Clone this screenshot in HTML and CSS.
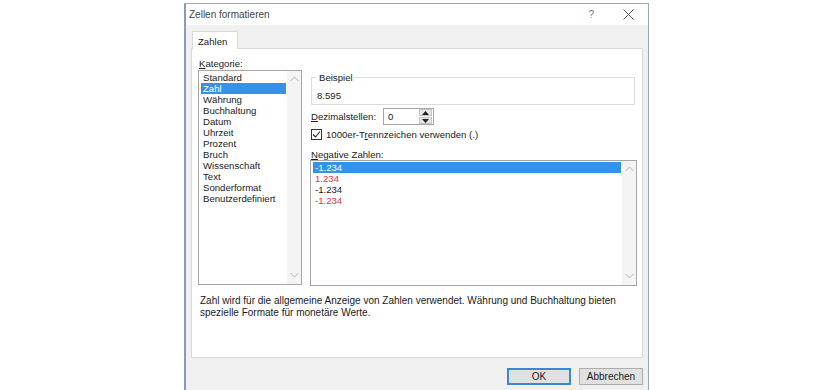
FILE: index.html
```html
<!DOCTYPE html>
<html>
<head>
    <title>Zellen formatieren</title>
    <link rel="stylesheet" href="styles.css">
</head>
<body>
    <div class="dialog">
        <div class="titlebar">
            <span class="title">Zellen formatieren</span>
            <span class="help">?</span>
            <svg class="close" width="11" height="11" viewBox="0 0 11 11">
                <path d="M0.5 0.5 L10.5 10.5 M10.5 0.5 L0.5 10.5" stroke="#555" stroke-width="1" fill="none"/>
            </svg>
        </div>
        <div class="body">
            <div class="tabs">
                <div class="tab">Zahlen</div>
            </div>
            <div class="panel">
                <div class="columns">
                    <div class="category">
                        <div class="label"><u>K</u>ategorie:</div>
                        <div class="listbox cat-list">
                            <ul class="items">
                                <li>Standard</li>
                                <li class="selected">Zahl</li>
                                <li>Währung</li>
                                <li>Buchhaltung</li>
                                <li>Datum</li>
                                <li>Uhrzeit</li>
                                <li>Prozent</li>
                                <li>Bruch</li>
                                <li>Wissenschaft</li>
                                <li>Text</li>
                                <li>Sonderformat</li>
                                <li>Benutzerdefiniert</li>
                            </ul>
                            <div class="scrollbar">
                                <svg width="9" height="6" viewBox="0 0 9 6"><path d="M0.5 5 L4.5 1 L8.5 5" stroke="#b0b0b0" fill="none"/></svg>
                                <svg width="9" height="6" viewBox="0 0 9 6"><path d="M0.5 1 L4.5 5 L8.5 1" stroke="#b0b0b0" fill="none"/></svg>
                            </div>
                        </div>
                    </div>
                    <div class="options">
                        <fieldset class="sample">
                            <legend>Beispiel</legend>
                            <div class="sample-value">8.595</div>
                        </fieldset>
                        <div class="decimals">
                            <span class="decimals-label"><u>D</u>ezimalstellen:</span>
                            <div class="spin">
                                <span class="spin-value">0</span>
                                <div class="spin-buttons">
                                    <div class="spin-btn">
                                        <svg width="7" height="4" viewBox="0 0 7 4"><path d="M0 4 L3.5 0 L7 4 Z" fill="#222"/></svg>
                                    </div>
                                    <div class="spin-btn">
                                        <svg width="7" height="4" viewBox="0 0 7 4"><path d="M0 0 L3.5 4 L7 0 Z" fill="#222"/></svg>
                                    </div>
                                </div>
                            </div>
                        </div>
                        <div class="check-row">
                            <span class="checkbox">
                                <svg width="9" height="9" viewBox="0 0 9 9"><path d="M1 4.5 L3.5 7 L8 1.5" stroke="#222" stroke-width="1.1" fill="none"/></svg>
                            </span>
                            <span>1000er-T<u>r</u>ennzeichen verwenden (.)</span>
                        </div>
                        <div class="label neg-label"><u>N</u>egative Zahlen:</div>
                        <div class="listbox neg-list">
                            <ul class="items">
                                <li class="selected">-1.234</li>
                                <li class="red">1.234</li>
                                <li>-1.234</li>
                                <li class="red">-1.234</li>
                            </ul>
                            <div class="scrollbar">
                                <svg width="9" height="6" viewBox="0 0 9 6"><path d="M0.5 5 L4.5 1 L8.5 5" stroke="#b0b0b0" fill="none"/></svg>
                                <svg width="9" height="6" viewBox="0 0 9 6"><path d="M0.5 1 L4.5 5 L8.5 1" stroke="#b0b0b0" fill="none"/></svg>
                            </div>
                        </div>
                    </div>
                </div>
                <p class="description">Zahl wird für die allgemeine Anzeige von Zahlen verwendet. Währung und Buchhaltung bieten<br>spezielle Formate für monetäre Werte.</p>
            </div>
            <div class="buttons">
                <button class="btn default">OK</button>
                <button class="btn">Abbrechen</button>
            </div>
        </div>
    </div>
</body>
</html>
```

FILE: styles.css
```css
:root {
    --text: #1a1a1a;
    --border: #d9d9d9;
    --gray: #f0f0f0;
    --select: #3392ea;
    --red: #e2363a;
}

* {
    box-sizing: border-box;
}

body {
    margin: 0;
    background: white;
    font-family: "Liberation Sans", Arial, sans-serif;
    font-size: 9.6px;
    line-height: 11px;
    color: var(--text);
    overflow: hidden;
}

.dialog {
    width: 465px;
    height: 400px;
    margin: 3px 0 0 184px;
    border: 1px solid #9aa8b8;
    border-left: 2px solid #8a9cb3;
    border-bottom: none;
    display: flex;
    flex-direction: column;
}

.titlebar {
    height: 21px;
    background: white;
    display: flex;
    align-items: center;
    padding-left: 3px;
}

.title {
    flex: 1;
    font-size: 10px;
    color: #444;
}

.help {
    color: #777;
    font-size: 10px;
    margin-right: 29px;
}

.close {
    margin-right: 14px;
}

.body {
    flex: 1;
    background: var(--gray);
    padding: 6px 5px 0 5px;
}

.tabs {
    display: flex;
    padding-left: 1px;
}

.tab {
    width: 46px;
    height: 18px;
    background: white;
    border: 1px solid var(--border);
    border-bottom: none;
    padding: 4px 0 0 5px;
    margin-bottom: -1px;
    position: relative;
}

.panel {
    background: white;
    border: 1px solid var(--border);
    height: 310px;
    padding: 9px 5px 0 6px;
}

.columns {
    display: flex;
    gap: 8px;
}

.category {
    width: 104px;
}

.label {
    padding-left: 1px;
    margin-bottom: 1px;
}

.listbox {
    border: 1px solid #a6a6a6;
    display: flex;
    background: white;
}

.cat-list {
    height: 215px;
}

.items {
    list-style: none;
    margin: 0;
    padding: 1px 1px 0 2px;
    flex: 1;
}

.items li {
    height: 11px;
    padding-left: 2px;
    white-space: nowrap;
}

.items li.selected {
    background: var(--select);
    color: white;
}

.items li.red {
    color: var(--red);
}

.scrollbar {
    width: 14px;
    background: #f4f4f4;
    display: flex;
    flex-direction: column;
    justify-content: space-between;
    align-items: center;
    padding: 5px 0 6px;
}

.options {
    width: 327px;
    margin-top: 14px;
}

.sample {
    margin: 0 2px 0 1px;
    padding: 7px 5px 3px;
    border: 1px solid #dcdcdc;
}

.sample legend {
    padding: 0 1px 0 3px;
    margin-left: -1px;
}

.decimals {
    display: flex;
    align-items: center;
    margin-top: 3px;
    padding-left: 1px;
}

.decimals-label {
    width: 72px;
}

.spin {
    width: 51px;
    height: 17px;
    border: 1px solid #a6a6a6;
    display: flex;
    align-items: center;
    padding-left: 4px;
}

.spin-value {
    flex: 1;
}

.spin-buttons {
    width: 13px;
    height: 15px;
    margin-right: 1px;
    display: flex;
    flex-direction: column;
    gap: 1px;
}

.spin-btn {
    flex: 1;
    background: #e6e6e6;
    border: 1px solid #c4c4c4;
    display: flex;
    align-items: center;
    justify-content: center;
}

.check-row {
    display: flex;
    align-items: center;
    gap: 4px;
    margin-top: 4px;
    padding-left: 1px;
}

.checkbox {
    width: 11px;
    height: 11px;
    border: 1px solid #333;
    display: flex;
    align-items: center;
    justify-content: center;
}

.neg-label {
    margin-top: 9px;
    margin-bottom: 0;
}

.neg-list {
    height: 126px;
}

.description {
    margin: 9px 0 0 2px;
    font-size: 10px;
    line-height: 12px;
    white-space: nowrap;
}

.buttons {
    display: flex;
    justify-content: flex-end;
    gap: 8px;
    margin-top: 10px;
}

.btn {
    height: 17px;
    background: #e1e1e1;
    border: 1px solid #adadad;
    font-family: "Liberation Sans", Arial, sans-serif;
    font-size: 10px;
    color: var(--text);
    padding: 0;
    width: 64px;
}

.btn.default {
    border: 2px solid #3c86d4;
}
```
